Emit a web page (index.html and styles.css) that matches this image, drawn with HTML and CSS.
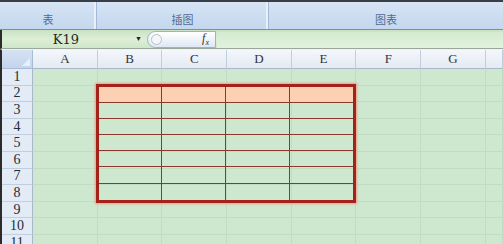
FILE: index.html
```html
<!DOCTYPE html>
<html lang="zh-CN">
  <head>
    <meta charset="UTF-8" />
    <title>Sheet</title>
    <link rel="stylesheet" href="styles.css">
  </head>
  <body>
    <div class="ribbon">
      <div class="group g-table">表</div>
      <div class="group g-pic">插图</div>
      <div class="group g-chart">图表</div>
    </div>

    <div class="formula-bar">
      <div class="name-box">K19</div>
      <div class="drop">&#9660;</div>
      <div class="fx-pill">
        <span class="fx-circle"></span>
        <span class="fx">f<sub>x</sub></span>
      </div>
      <div class="formula-input"></div>
    </div>

    <div class="sheet-wrap">
      <div class="sheet" id="sheet">
        <div class="corner"><span class="tri"></span></div>
      </div>
      <div class="sheet overlay">
        <div class="red-table" id="red-table"></div>
      </div>
    </div>

    <script>
      const sheet = document.getElementById("sheet");
      const cols = ["A", "B", "C", "D", "E", "F", "G", ""];

      cols.forEach((c) => {
        const h = document.createElement("div");
        h.className = "col-head";
        h.textContent = c;
        sheet.appendChild(h);
      });

      for (let r = 1; r <= 11; r++) {
        const rh = document.createElement("div");
        rh.className = "row-head";
        rh.textContent = r;
        sheet.appendChild(rh);
        cols.forEach(() => {
          const cell = document.createElement("div");
          cell.className = "cell";
          sheet.appendChild(cell);
        });
      }

      // the bordered block B2:E8
      const box = document.getElementById("red-table");
      for (let r = 0; r < 7; r++) {
        for (let c = 0; c < 4; c++) {
          const td = document.createElement("div");
          td.className = r === 0 ? "rt-cell first" : "rt-cell";
          box.appendChild(td);
        }
      }
    </script>
  </body>
</html>
```

FILE: styles.css
```css
body {
  margin: 0;
  width: 503px;
  height: 244px;
  overflow: hidden;
  background: #cde8cf;
  font-family: "Liberation Serif", "DejaVu Serif", serif;
}

/* ribbon group labels */
.ribbon {
  height: 27px;
  display: flex;
  border-top: 2px solid #3a3f47;
  border-bottom: 1px solid #7d8ea3;
  background: linear-gradient(#d6e4f5, #c4d7ee);
}

.group {
  display: flex;
  align-items: center;
  justify-content: center;
  padding-top: 6px;
  box-sizing: border-box;
  font-family: "Noto Sans CJK SC", "Noto Sans", sans-serif;
  font-size: 11px;
  color: #506b94;
  border-right: 1px solid #a3b9d6;
  box-shadow: inset -2px 0 0 #e9f0f9;
}

.g-table {
  width: 97px;
}

.g-pic {
  width: 172px;
}

.g-chart {
  flex: 1;
  border-right: none;
  box-shadow: none;
}

/* formula bar */
.formula-bar {
  height: 18px;
  display: flex;
  align-items: stretch;
  border-left: 2px solid #2b2b2b;
  border-bottom: 1px solid #9aa79a;
  background: linear-gradient(#c9e2c2, #dcefd6 50%, #cfe6c8);
}

.name-box {
  width: 128px;
  text-align: center;
  font-family: "DejaVu Serif", serif;
  font-size: 13px;
  line-height: 19px;
  color: #1d2a1d;
}

.drop {
  width: 17px;
  font-size: 7px;
  line-height: 19px;
  text-align: center;
  color: #222;
}

.fx-pill {
  width: 69px;
  margin-top: 1px;
  display: flex;
  align-items: center;
  justify-content: space-between;
  padding: 0 6px 0 3px;
  box-sizing: border-box;
  border: 1px solid #9fb1c6;
  border-radius: 9px 0 0 9px;
  background: linear-gradient(#ffffff, #dfe8f3);
}

.fx-circle {
  width: 9px;
  height: 9px;
  border-radius: 50%;
  border: 1px solid #b7c2cd;
  background: #f4f6f8;
}

.fx {
  font-style: italic;
  font-size: 12px;
  color: #333;
}

.fx sub {
  font-size: 8px;
}

.formula-input {
  flex: 1;
  margin: 2px 0 0 1px;
  background: linear-gradient(#d4ead0, #e2f2dd);
}

/* the sheet */
.sheet-wrap {
  display: grid;
}

.sheet {
  grid-area: 1 / 1;
  display: grid;
  grid-template-columns: 31px repeat(7, 64.7px) 1fr;
  grid-template-rows: 19px repeat(11, 16.6px);
  border-left: 2px solid #2b2b2b;
  border-top: 1px solid #eef3f8;
}

.overlay {
  border-left-color: transparent;
  border-top-color: transparent;
  pointer-events: none;
}

.corner {
  position: relative;
  background: linear-gradient(#d5e2f2, #c3d5ec);
  border-right: 1px solid #a8bcd6;
  border-bottom: 1px solid #a8bcd6;
}

.tri {
  position: absolute;
  right: 2px;
  bottom: 2px;
  border-left: 8px solid transparent;
  border-bottom: 8px solid #e8eff8;
}

.col-head {
  display: flex;
  align-items: center;
  justify-content: center;
  font-size: 13px;
  color: #2f3440;
  background: linear-gradient(#f4f7fb, #e3eaf3);
  border-right: 1px solid #c2cedd;
  border-bottom: 1px solid #a9b8cb;
}

.row-head {
  display: flex;
  align-items: center;
  justify-content: center;
  font-size: 14px;
  color: #262c36;
  background: #e2ebf6;
  border-right: 1px solid #a9b8cb;
  border-bottom: 1px solid #c2cedd;
}

.cell {
  border-right: 1px solid #c0dcc3;
  border-bottom: 1px solid #c0dcc3;
}

.red-table {
  grid-column: 3 / 7;
  grid-row: 3 / 10;
  margin: -2px 0 -1px -2px;
  display: grid;
  grid-template-columns: repeat(4, 1fr);
  grid-template-rows: repeat(7, 1fr);
  border: 3px solid #a3221a;
  box-shadow: 0 0 2px 1px #f29a88;
}

.rt-cell {
  border-right: 1px solid #8a3a2c;
  border-bottom: 1px solid #8a3a2c;
}

.rt-cell:nth-child(4n) {
  border-right: none;
}

.rt-cell:nth-last-child(-n + 4) {
  border-bottom: none;
}

.first {
  background: #fcd1b3;
}
```
